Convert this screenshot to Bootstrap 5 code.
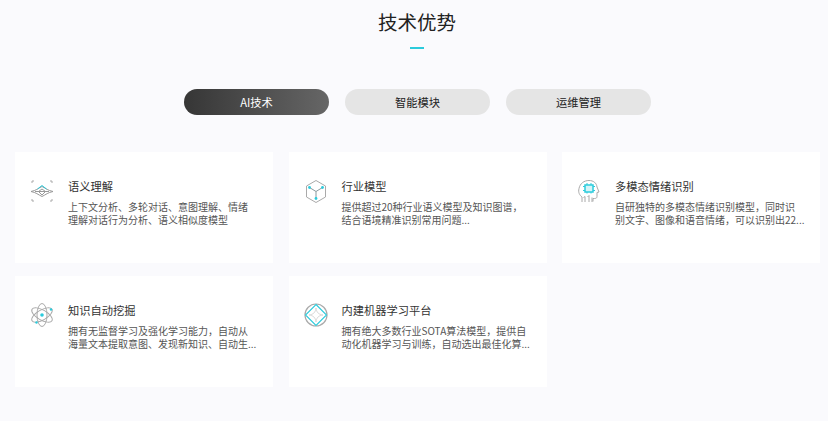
<!DOCTYPE html>
<html lang="zh-CN">
  <head>
    <meta charset="UTF-8" />
    <title>技术优势</title>
    <meta name="viewport" content="width=device-width, initial-scale=1" />
    <link href="https://cdn.jsdelivr.net/npm/bootstrap@5.3.0/dist/css/bootstrap.min.css" rel="stylesheet" />
    <style>
      body {
        background: #fafafd;
        font-family: "Noto Sans CJK SC", "Noto Sans", sans-serif;
        color: #333;
        overflow: hidden;
      }
      .adv-page { height: 421px; padding: 8px 8px 0 15px; }
      .adv-head { padding-right: 1px; }
      .adv-title { font-size: 19.5px; line-height: 28px; color: #222; font-weight: 400; margin: 0; }
      .adv-rule { width: 14px; height: 2px; background: #2ccbdc; margin: 11px auto 0; }
      .adv-tabs { margin-top: 40px; gap: 16px; }
      .adv-tab {
        width: 145px; height: 26px; padding: 0; border: 0; border-radius: 13px;
        background: #e5e5e5; color: #222; font-size: 11.25px; line-height: 26px;
      }
      .adv-tab.is-on { background: linear-gradient(90deg, #363636, #666); color: #fff; }
      .adv-grid {
        display: grid; grid-template-columns: repeat(3, 258px); column-gap: 15.5px; row-gap: 13.5px;
        margin-top: 37px;
      }
      .adv-item { height: 110.5px; background: #fff; padding: 26px 15.5px 0 15px; gap: 14px; }
      .adv-item svg { flex: 0 0 24px; width: 24px; height: 24px; margin-top: 1px; }
      .adv-name { font-size: 11.25px; line-height: 16px; color: #333; margin: 0 0 6px; font-weight: 400; }
      .adv-desc { font-size: 10px; line-height: 13px; color: #555; margin: 0; }
    </style>
  </head>
  <body>
    <div class="adv-page">
      <div class="adv-head text-center">
        <h2 class="adv-title">技术优势</h2>
        <div class="adv-rule"></div>
      </div>

      <div class="adv-tabs d-flex justify-content-center">
        <button type="button" class="btn adv-tab is-on">AI技术</button>
        <button type="button" class="btn adv-tab">智能模块</button>
        <button type="button" class="btn adv-tab">运维管理</button>
      </div>

      <div class="adv-grid">
        <div class="adv-item d-flex">
          <svg viewBox="0 0 24 24" fill="none" stroke="#aaa" stroke-width="1">
            <path d="M2 4V2h2M20 2h2v2M2 20v2h2M20 22h2v-2" />
            <path d="M1 12.500C6 11.500 8 9.500 12 7.500c4 2 6 4 11 5-5 1-7 3-11 5-4-2-6-4-11-5z" stroke="#999" />
            <path d="M5 12.500h14M12 16l-3.500-3.500 3.500-2.500 3.500 2.500z" stroke="#999" />
            <path d="M7.500 10L12 6.500 16.500 10" stroke="#2ccbdc" />
          </svg>
          <div>
            <h3 class="adv-name">语义理解</h3>
            <p class="adv-desc">上下文分析、多轮对话、意图理解、情绪理解对话行为分析、语义相似度模型</p>
          </div>
        </div>

        <div class="adv-item d-flex">
          <svg viewBox="0 0 24 24" fill="none" stroke="#aaa" stroke-width="1">
            <path d="M12 1.500l9.500 5.500v11L12 23.500 2.500 18V7z" />
            <path d="M5.500 8.500L12 12.500l6.500-4M12 12.500v7" stroke="#8a9a9e" />
            <circle cx="5.500" cy="8.500" r="1.400" fill="#2ccbdc" stroke="none" />
            <circle cx="18.500" cy="8.500" r="1.400" fill="#2ccbdc" stroke="none" />
            <circle cx="12" cy="19.500" r="1.400" fill="#2ccbdc" stroke="none" />
          </svg>
          <div>
            <h3 class="adv-name">行业模型</h3>
            <p class="adv-desc">提供超过20种行业语义模型及知识图谱，结合语境精准识别常用问题...</p>
          </div>
        </div>

        <div class="adv-item d-flex">
          <svg viewBox="0 0 24 24" fill="none" stroke="#aaa" stroke-width="1">
            <path d="M5 23v-5C2.500 16 1 13.500 2 9.500 3 4.500 7 1.500 12 1.500c4.500 0 7.500 2.500 8 6.500l2 5-2 .5v4c0 1.500-1 2-2.500 2H16v3" />
            <path d="M8 23v-5.500M12 23v-6.500M15 23v-4.500M8 17.500l-1.500 1M12 16.500l-1.500 1.500" />
            <rect x="8" y="6" width="8" height="7" fill="#d5f4f7" stroke="#2ccbdc" stroke-width="1.500" />
            <path d="M6 7.500h2M6 11.500h2M16 7.500h2M16 11.500h2M10 4v2M14 4v2M10 13v1.500M14 13v1.500" stroke="#2ccbdc" />
          </svg>
          <div>
            <h3 class="adv-name">多模态情绪识别</h3>
            <p class="adv-desc">自研独特的多模态情绪识别模型，同时识别文字、图像和语音情绪，可以识别出22...</p>
          </div>
        </div>

        <div class="adv-item d-flex">
          <svg viewBox="0 0 24 24" fill="none" stroke="#aaa" stroke-width="1">
            <ellipse cx="12" cy="12" rx="5" ry="11.500" />
            <ellipse cx="12" cy="12" rx="5" ry="11.500" transform="rotate(60 12 12)" />
            <ellipse cx="12" cy="12" rx="5" ry="11.500" transform="rotate(-60 12 12)" />
            <circle cx="12" cy="12" r="1.800" fill="#2ccbdc" stroke="none" />
            <circle cx="21" cy="6.500" r="1.200" fill="#2ccbdc" stroke="none" />
            <circle cx="6.500" cy="19.500" r="1.200" fill="#2ccbdc" stroke="none" />
          </svg>
          <div>
            <h3 class="adv-name">知识自动挖掘</h3>
            <p class="adv-desc">拥有无监督学习及强化学习能力，自动从海量文本提取意图、发现新知识、自动生...</p>
          </div>
        </div>

        <div class="adv-item d-flex">
          <svg viewBox="0 0 24 24" fill="none" stroke="#aaa" stroke-width="1">
            <circle cx="12" cy="12" r="11" stroke-width="1.200" />
            <path d="M12 1.500L22.500 12 12 22.500 1.500 12z" stroke="#2ccbdc" stroke-width="1.100" />
            <path d="M12 5c.6 4.500 2.500 6.400 7 7-4.500.6-6.400 2.500-7 7-.6-4.500-2.500-6.400-7-7 4.500-.6 6.400-2.500 7-7z" stroke="#d0d0d0" stroke-width=".8" />
          </svg>
          <div>
            <h3 class="adv-name">内建机器学习平台</h3>
            <p class="adv-desc">拥有绝大多数行业SOTA算法模型，提供自动化机器学习与训练，自动选出最佳化算...</p>
          </div>
        </div>
      </div>
    </div>

    <script src="https://cdn.jsdelivr.net/npm/bootstrap@5.3.0/dist/js/bootstrap.bundle.min.js"></script>
  </body>
</html>
